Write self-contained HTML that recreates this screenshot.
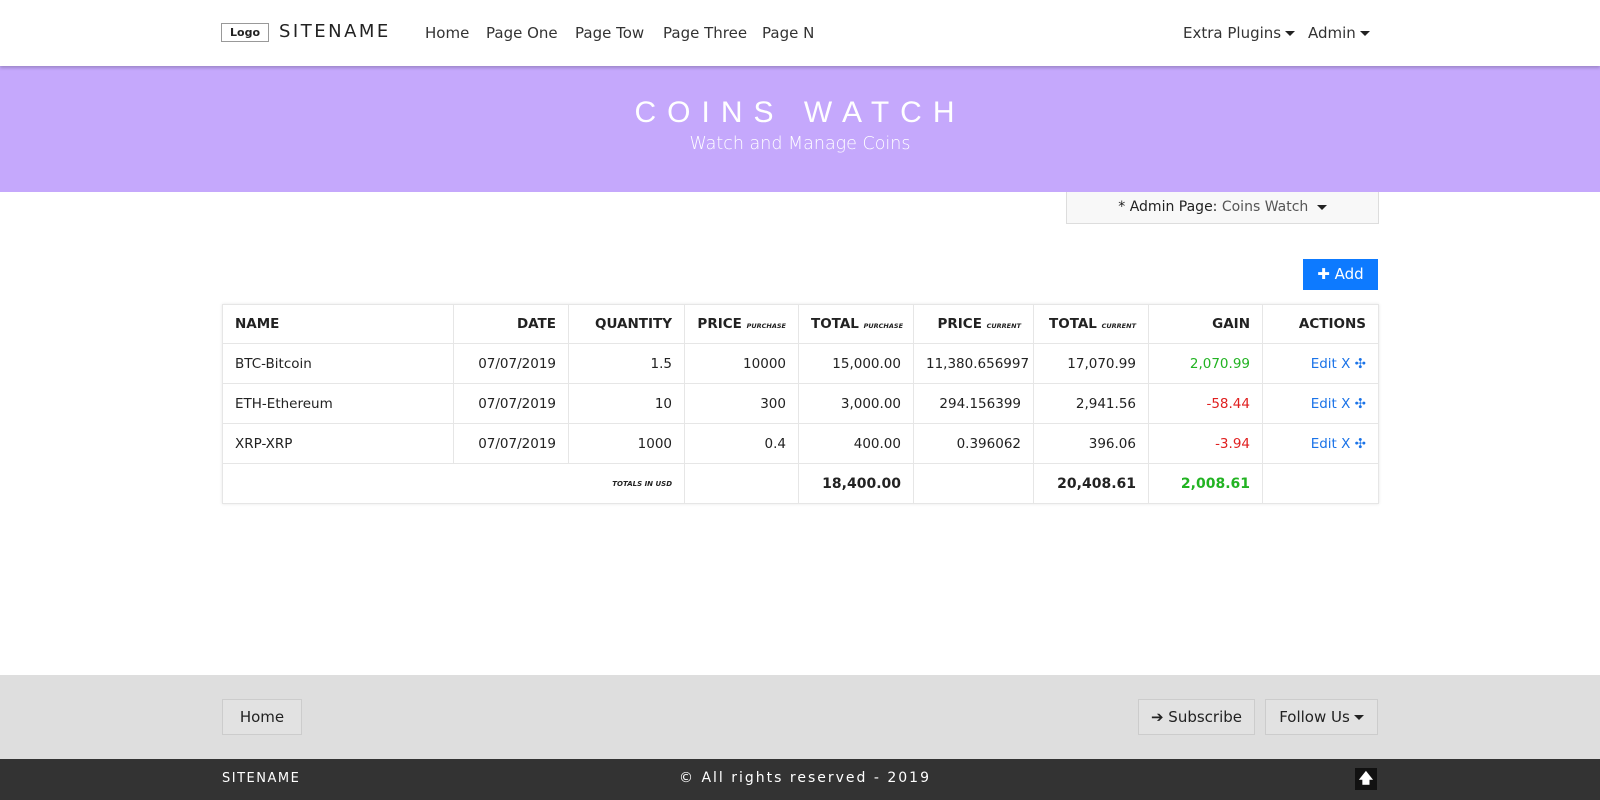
<!DOCTYPE html>
<html><head><meta charset="utf-8"><style>
*{box-sizing:border-box;margin:0;padding:0}
body{width:1600px;height:800px;position:relative;background:#fff;font-family:"DejaVu Sans","Liberation Sans",sans-serif;color:#222;overflow:hidden}
.nav{position:absolute;top:0;left:0;width:1600px;height:66px;background:#fff;box-shadow:0 2px 3px rgba(0,0,0,.2);z-index:2}
.abs{position:absolute;white-space:nowrap}
.logo{left:221px;top:23px;width:48px;height:19px;border:1px solid #999;font-size:11px;font-weight:bold;text-align:center;line-height:17px}
.site{left:279px;top:21px;font-size:18px;letter-spacing:2.5px}
.nl{top:24px;font-size:15px;color:#333}
.caret{display:inline-block;border-left:5px solid transparent;border-right:5px solid transparent;border-top:5px solid #222;vertical-align:middle;margin-left:4px}
.hero{position:absolute;top:66px;left:0;width:1600px;height:126px;background:#c5a8fc;color:#fff;text-align:center}
.hero h1{font-weight:300;font-size:30px;letter-spacing:11px;margin-top:30px;font-family:"Liberation Sans",sans-serif}
.hero p{font-size:17.5px;margin-top:4px;font-weight:300}
.admin{left:1066px;top:192px;width:313px;height:32px;border:1px solid #ddd;border-top:none;background:#f8f8f8;font-size:14px;text-align:center;line-height:30px}
.add{left:1303px;top:259px;width:75px;height:31px;background:#0d7aff;color:#fff;font-size:15px;text-align:center;line-height:31px}
table{position:absolute;left:222px;top:304px;width:1156px;table-layout:fixed;border-collapse:collapse;font-size:13.5px;box-shadow:0 0 3px rgba(0,0,0,.1)}
td,th{border:1px solid #e6e6e6;padding:0 12px;text-align:right;height:40px;white-space:nowrap;overflow:hidden}
th{height:39px;font-size:13.5px}
th small{font-size:6.5px;font-style:italic;font-weight:bold}
.l{text-align:left}
.g{color:#22b322}.r{color:#e02020}.b{color:#1a73e8}
.foot{position:absolute;top:675px;left:0;width:1600px;height:84px;background:#dedede}
.fb{height:36px;border:1px solid #ccc;background:#e2e2e2;font-size:15px;line-height:34px;text-align:center;color:#222}
.bot{position:absolute;top:759px;left:0;width:1600px;height:41px;background:#333;color:#fff}
</style></head><body>
<div class="nav">
<div class="abs logo">Logo</div>
<div class="abs site">SITENAME</div>
<div class="abs nl" style="left:425px">Home</div>
<div class="abs nl" style="left:486px">Page One</div>
<div class="abs nl" style="left:575px">Page Tow</div>
<div class="abs nl" style="left:663px">Page Three</div>
<div class="abs nl" style="left:762px">Page N</div>
<div class="abs nl" style="left:1183px">Extra Plugins<span class="caret"></span></div>
<div class="abs nl" style="left:1308px">Admin<span class="caret"></span></div>
</div>
<div class="hero"><h1>COINS WATCH</h1><p>Watch and Manage Coins</p></div>
<div class="abs admin">* Admin Page: <span style="color:#555">Coins Watch</span> <span class="caret"></span></div>
<div class="abs add"><b>✚</b> Add</div>
<table>
<colgroup><col style="width:231px"><col style="width:115px"><col style="width:116px"><col style="width:114px"><col style="width:115px"><col style="width:120px"><col style="width:115px"><col style="width:114px"><col style="width:116px"></colgroup>
<tr><th class="l">NAME</th><th>DATE</th><th>QUANTITY</th><th>PRICE <small>PURCHASE</small></th><th>TOTAL <small>PURCHASE</small></th><th>PRICE <small>CURRENT</small></th><th>TOTAL <small>CURRENT</small></th><th>GAIN</th><th>ACTIONS</th></tr>
<tr><td class="l">BTC-Bitcoin</td><td>07/07/2019</td><td>1.5</td><td>10000</td><td>15,000.00</td><td>11,380.656997</td><td>17,070.99</td><td class="g">2,070.99</td><td class="b">Edit X ✣</td></tr>
<tr><td class="l">ETH-Ethereum</td><td>07/07/2019</td><td>10</td><td>300</td><td>3,000.00</td><td>294.156399</td><td>2,941.56</td><td class="r">-58.44</td><td class="b">Edit X ✣</td></tr>
<tr><td class="l">XRP-XRP</td><td>07/07/2019</td><td>1000</td><td>0.4</td><td>400.00</td><td>0.396062</td><td>396.06</td><td class="r">-3.94</td><td class="b">Edit X ✣</td></tr>
<tr><td colspan="3" style="font-size:7px;font-weight:bold;font-style:italic">TOTALS IN USD</td><td></td><td style="font-weight:bold;font-size:14px">18,400.00</td><td></td><td style="font-weight:bold;font-size:14px">20,408.61</td><td class="g" style="font-weight:bold;font-size:14px">2,008.61</td><td></td></tr>
</table>
<div class="foot">
<div class="abs fb" style="left:222px;top:24px;width:80px">Home</div>
<div class="abs fb" style="left:1138px;top:24px;width:117px">➔ Subscribe</div>
<div class="abs fb" style="left:1265px;top:24px;width:113px">Follow Us<span class="caret"></span></div>
</div>
<div class="bot">
<div class="abs" style="left:222px;top:12px;font-size:13px;letter-spacing:1.5px">SITENAME</div>
<div class="abs" style="left:679px;top:11px;font-size:14px;letter-spacing:2px">© All rights reserved - 2019</div>
<div class="abs" style="left:1355px;top:9px;width:22px;height:22px;background:#111;text-align:center;line-height:22px;font-size:14px;font-weight:bold">🡅</div>
</div>
</body></html>
